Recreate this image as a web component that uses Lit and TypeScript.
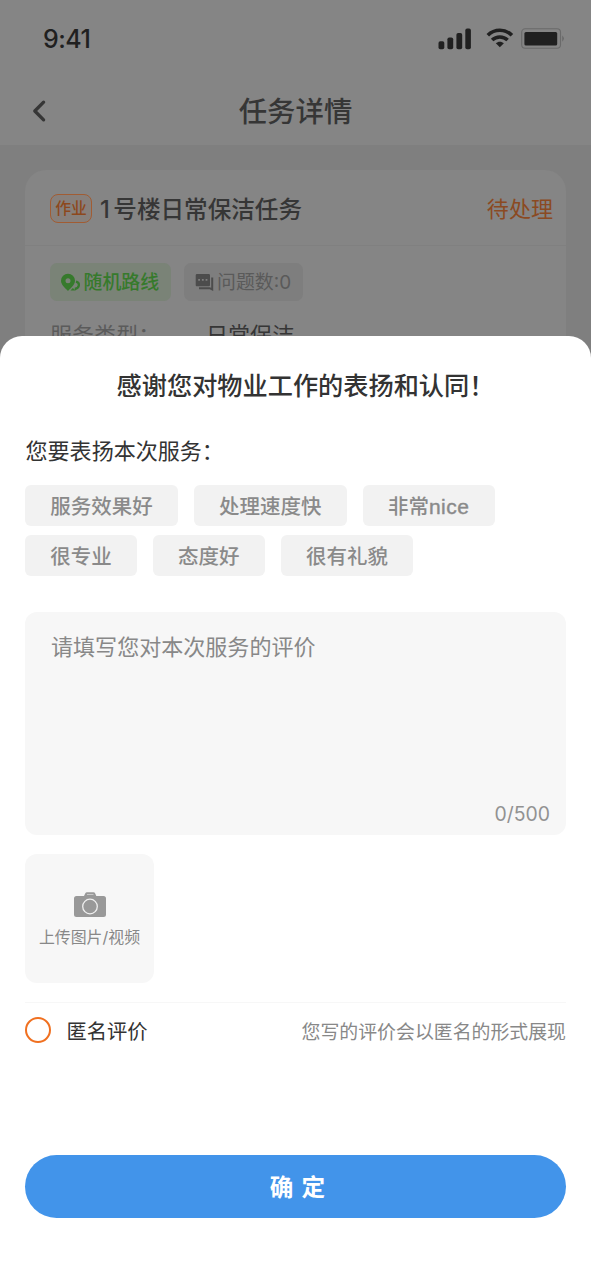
import { LitElement, html, css } from "lit";
import { customElement, state } from "lit/decorators.js";

@customElement("status-bar")
class StatusBar extends LitElement {
  static styles = css`
    :host { display: flex; height: 77px; box-sizing: border-box; padding: 0 27px 0 43px; align-items: center; justify-content: space-between; color: #202020; }
    .time { font: 500 25px/30px Inter, sans-serif; letter-spacing: -0.5px; }
    .icons { display: block; }
  `;
  render() {
    return html`
      <span class="time">9:41</span>
      <svg class="icons" width="127" height="24" viewBox="0 0 127 24" fill="#202020">
        <rect x="1.500" y="14.2" width="5.8" height="8" rx="1.8" />
        <rect x="10.400" y="10.4" width="5.8" height="11.8" rx="1.8" />
        <rect x="19.400" y="6" width="5.8" height="16.2" rx="1.8" />
        <rect x="28.300" y="1.6" width="5.6" height="20.6" rx="1.8" />
        <path d="M50.8 8.3C57.500 1.600 68.200 1.600 74.900 8.300" fill="none" stroke="#202020" stroke-width="3.600" />
        <path d="M55.100 13C59.400 8.900 66.300 8.900 70.600 13" fill="none" stroke="#202020" stroke-width="3.600" />
        <path d="M58.800 16.300C61 14.100 64.700 14.100 66.900 16.300L62.850 20.300Z" />
        <rect x="84.700" y="1.800" width="38.800" height="19.500" rx="3.500" fill="none" stroke="#6a6a6a" stroke-width="1.100" />
        <rect x="87.400" y="4.900" width="32.800" height="13.700" rx="1.600" />
        <path d="M125.300 8.500q3 3 0 6.300z" fill="#666" />
      </svg>
    `;
  }
}

@customElement("task-page")
class TaskPage extends LitElement {
  static styles = css`
    :host { display: block; height: 1280px; background: #7f7f7f; overflow: hidden; }
    .head { background: #858585; height: 145px; }
    .nav { display: grid; grid-template-columns: 80px 1fr 80px; height: 68px; align-items: center; }
    .back { margin-left: 31px; display: block; }
    .title { font-size: 28.4px; font-weight: 500; line-height: 40px; text-align: center; color: #363636; padding-top: 1px; }
    .card { margin: 25px 25px 0; background: #858585; border-radius: 21px; height: 400px; }
    .row { display: flex; align-items: center; height: 75px; padding: 0 13px 0 25px; border-bottom: 1px solid #808080; }
    .kind { width: 42px; height: 29px; box-sizing: border-box; margin-top: 1px; border: 1.300px solid #a15c33; border-radius: 8px; background: #87807c; color: #8d481d; font-size: 15.8px; font-weight: 500; line-height: 28px; text-align: center; }
    .name { margin-left: 8px; flex: 1; padding-top: 4px; font-size: 23.6px; font-weight: 500; line-height: 32px; color: #363636; }
    .num { letter-spacing: 3.500px; }
    .state { font-size: 22.06px; line-height: 32px; color: #8b4a22; padding-top: 2px; }
    .pills { display: flex; gap: 12.500px; padding: 17px 25px 0; }
    .pill { display: flex; align-items: center; height: 38px; box-sizing: border-box; border-radius: 7px; background: #7e7e7e; color: #5a5a5a; font-size: 18.9px; line-height: 28px; padding: 0 12px 0 11px; gap: 3.500px; }
    .pill span { padding-top: 2px; }
    .pill.green { background: #7a8377; color: #367a2c; font-weight: 500; padding-left: 10px; }
    .info { display: grid; grid-template-columns: 156px 1fr; padding: 18px 25px 0; font-size: 22.06px; line-height: 32px; color: #5b5b5b; }
    .value { color: #363636; }
  `;
  render() {
    return html`
      <div class="head">
        <status-bar></status-bar>
        <div class="nav">
          <svg class="back" width="16" height="24" viewBox="0 0 16 24" fill="none" stroke="#363636" stroke-width="3.300" stroke-linecap="round" stroke-linejoin="round"><path d="M12.600 3.200L3.800 12L12.600 20.800" /></svg>
          <div class="title">任务详情</div>
        </div>
      </div>
      <div class="card">
        <div class="row">
          <span class="kind">作业</span>
          <span class="name"><span class="num">1</span>号楼日常保洁任务</span>
          <span class="state">待处理</span>
        </div>
        <div class="pills">
          <div class="pill green">
            <svg width="20" height="19" viewBox="0 0 20 19">
              <path fill="#367a2c" fill-rule="evenodd" d="M8 .800a7 7 0 0 1 7 7c0 4-4.200 7.200-7 10.200C5.200 15 1 11.800 1 7.800a7 7 0 0 1 7-7zm0 4.500a2.500 2.500 0 1 0 0 5 2.500 2.500 0 0 0 0-5z" />
              <path fill="none" stroke="#367a2c" stroke-width="2.300" d="M16 8.700c4.200 1 3.800 6.300-1.200 7.300" />
              <path fill="#367a2c" d="M10.500 17.600l2.300-2.700 3 2.700z" />
            </svg>
            <span>随机路线</span>
          </div>
          <div class="pill">
            <svg width="19" height="19" viewBox="0 0 19 19">
              <path fill="#4c4c4c" fill-rule="evenodd" d="M2 1h11.700a1.300 1.300 0 0 1 1.300 1.300v9.700a1.300 1.300 0 0 1-1.300 1.300H4.700L1.700 13.300Q.700 13.300.700 12V2.300A1.300 1.300 0 0 1 2 1zM3.200 6v1.800h1.800v-1.800zm3.700 0v1.800h1.800v-1.800zm3.700 0v1.800h1.800v-1.800z" />
              <path fill="none" stroke="#4c4c4c" stroke-width="2" d="M17.200 4.500v12l-2.600-1.300H4" />
            </svg>
            <span>问题数:0</span>
          </div>
        </div>
        <div class="info"><span>服务类型：</span><span class="value">日常保洁</span></div>
      </div>
    `;
  }
}

@customElement("praise-sheet")
class PraiseSheet extends LitElement {
  static styles = css`
    :host { display: flex; flex-direction: column; box-sizing: border-box; height: 944.500px; padding: 32px 25px 0; background: #fff; border-radius: 22px 22px 0 0; color: #333; }
    .title { font-size: 25.2px; font-weight: 500; line-height: 36px; text-align: center; padding-left: 20px; }
    .ask { margin-top: 31px; font-size: 22.06px; line-height: 32px; padding-left: 0.500px; }
    .chips { display: flex; flex-wrap: wrap; gap: 9.500px 16px; margin-top: 18px; }
    .chip { box-sizing: border-box; height: 41px; padding: 1px 25.200px 0; background: #f2f2f2; border-radius: 6px; color: #8a8a8a; font-size: 20.5px; font-weight: 500; line-height: 42px; }
    .latin { font-family: "Liberation Sans", sans-serif; font-size: 21px; letter-spacing: 0.500px; -webkit-text-stroke: 0.400px #8a8a8a; font-weight: 400; }
    .box { display: flex; flex-direction: column; justify-content: space-between; box-sizing: border-box; height: 223px; margin-top: 35.500px; padding: 19px 16px 6px 26px; background: #f7f7f7; border-radius: 12px; color: #888; font-size: 22.06px; line-height: 32px; }
    .count { align-self: flex-end; font-size: 19.4px; line-height: 30px; color: #929292; }
    .upload { display: flex; flex-direction: column; align-items: center; width: 129px; height: 129px; box-sizing: border-box; padding-top: 37.500px; margin-top: 19.500px; background: #f7f7f7; border-radius: 12px; font-size: 15.9px; line-height: 24px; color: #888; }
    .cam { display: block; margin-bottom: 8px; }
    .anon { display: flex; align-items: center; margin-top: 19px; border-top: 1.500px solid #f7f7f7; height: 54px; }
    .radio { box-sizing: border-box; width: 26px; height: 26px; border: 2px solid #f07020; border-radius: 50%; }
    .label { margin-left: 15.500px; flex: 1; font-size: 20.3px; line-height: 30px; padding-top: 3px; }
    .hint { font-size: 18.9px; line-height: 28px; color: #888; padding-top: 5px; }
    .ok { box-sizing: border-box; margin-top: 97.500px; height: 63px; border: 0; border-radius: 32px; background: #4294ea; color: #fff; font: inherit; font-size: 23.6px; font-weight: 700; line-height: 60px; padding: 3px 0 0 4px; word-spacing: 2.500px; }
  `;
  @state() tags = ["服务效果好", "处理速度快", "非常nice", "很专业", "态度好", "很有礼貌"];
  label(t: string) {
    const m = t.match(/^(.*?)([a-z]+)$/);
    return m ? html`${m[1]}<span class="latin">${m[2]}</span>` : t;
  }
  render() {
    return html`
      <div class="title">感谢您对物业工作的表扬和认同！</div>
      <div class="ask">您要表扬本次服务：</div>
      <div class="chips">${this.tags.map((t) => html`<span class="chip">${this.label(t)}</span>`)}</div>
      <div class="box"><span>请填写您对本次服务的评价</span><span class="count">0/500</span></div>
      <div class="upload">
        <svg class="cam" width="32" height="26" viewBox="0 0 32 26">
          <path fill="#999" d="M10 4L11.200 1.500Q11.800.300 13 .300h6.500q1.200 0 1.700 1.200L22.300 4H29.500Q32 4 32 6.500V22.500q0 2.500-2.500 2.500h-27Q0 25 0 22.500V6.500Q0 4 2.500 4z" />
          <path stroke="#c8c8c8" d="M13 2.500h6.500" />
          <circle cx="16" cy="14.500" r="7.300" fill="none" stroke="#f0f0f0" stroke-width="1.300" />
        </svg>
        <span>上传图片/视频</span>
      </div>
      <div class="anon"><span class="radio"></span><span class="label">匿名评价</span><span class="hint">您写的评价会以匿名的形式展现</span></div>
      <button class="ok">确 定</button>
    `;
  }
}

@customElement("app-root")
class AppRoot extends LitElement {
  static styles = css`
    :host { display: block; position: relative; width: 591px; height: 1280px; overflow: hidden; font-family: Inter, "Noto Sans CJK SC", sans-serif; }
    .sheet { position: absolute; left: 0; right: 0; bottom: 0; }
  `;
  render() {
    return html`<task-page></task-page><praise-sheet class="sheet"></praise-sheet>`;
  }
}
